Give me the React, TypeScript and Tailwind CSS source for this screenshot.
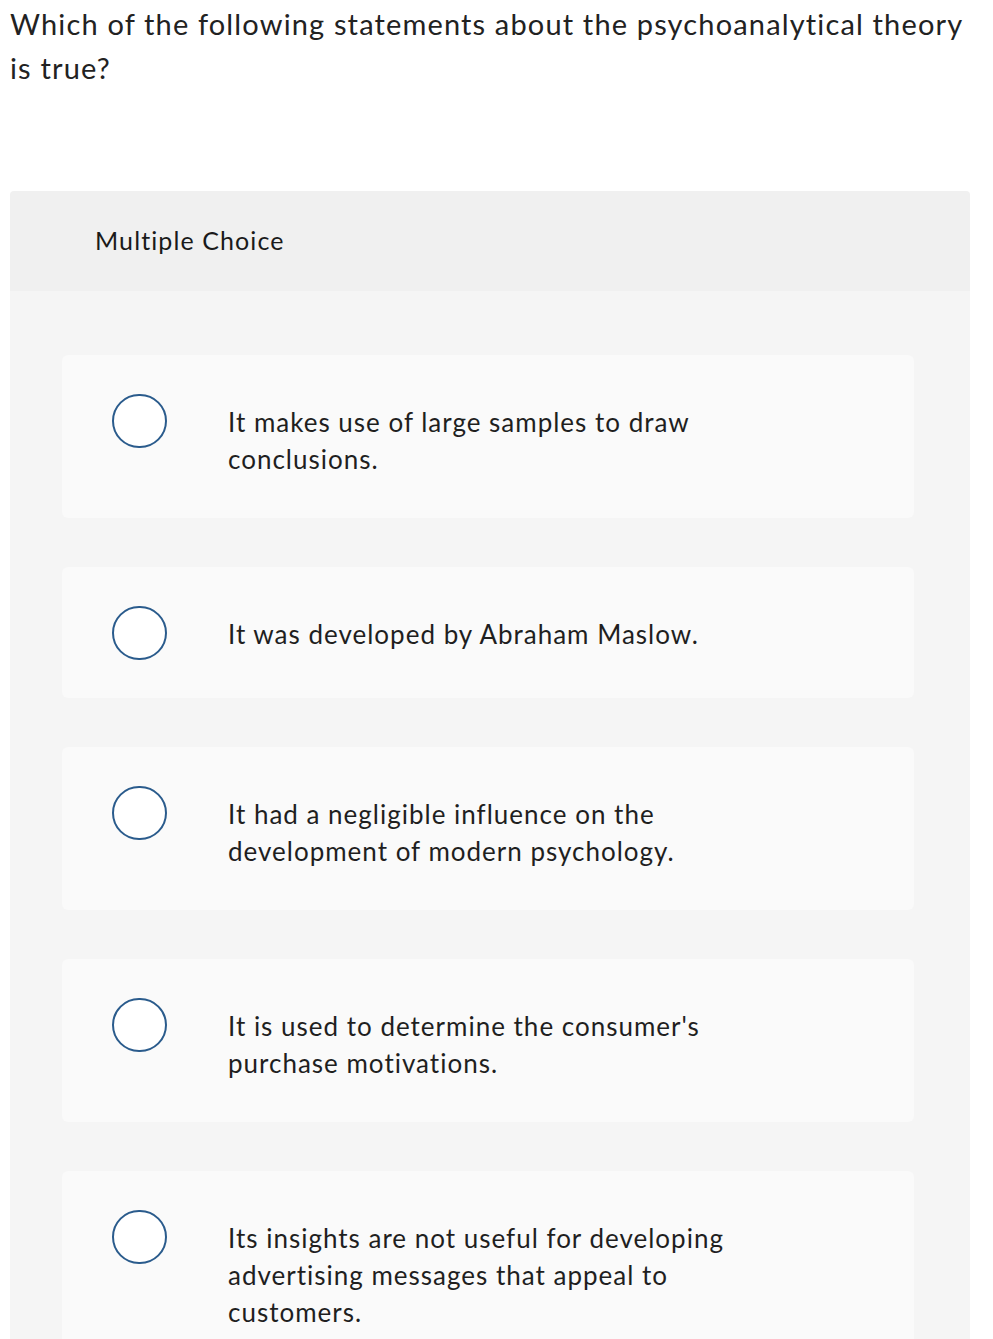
import React, { useState } from 'react';

const options = [
  'It makes use of large samples to draw conclusions.',
  'It was developed by Abraham Maslow.',
  'It had a negligible influence on the development of modern psychology.',
  "It is used to determine the consumer's purchase motivations.",
  'Its insights are not useful for developing advertising messages that appeal to customers.',
];

export default function App() {
  const [selected, setSelected] = useState<number | null>(null);

  return (
    <div className="w-full min-h-screen bg-white font-['Lato',sans-serif] text-[#1f1f1f]">
      {/* Question */}
      <div className="mx-[10px] max-w-[968px] pt-[2px] text-[29px] leading-[44px] tracking-[1.15px] text-[#222]">
        Which of the following statements about the psychoanalytical theory is true?
      </div>

      {/* Answer panel */}
      <div className="mx-[10px] mt-[101px] w-[960px] rounded-t-[4px] overflow-hidden">
        <div className="h-[100px] bg-[#f0f0f0] flex items-center pl-[85px]">
          <span className="text-[25px] tracking-[1.1px] text-[#1a1a1a]">Multiple Choice</span>
        </div>

        <div className="bg-[#f5f5f5] pl-[52px] pr-[56px] pt-[64px] pb-[60px] flex flex-col gap-[49px]">
          {options.map((text, i) => (
            <button
              key={i}
              onClick={() => setSelected(i)}
              className="w-full bg-[#fafafa] rounded-[6px] flex items-start pl-[50px] pt-[39px] pb-[38px] text-left cursor-pointer"
            >
              <span className="w-[55px] h-[54px] rounded-full border-2 border-[#2a5b8c] bg-white shrink-0 flex items-center justify-center">
                {selected === i && <span className="w-[27px] h-[27px] rounded-full bg-[#2a5b8c]" />}
              </span>
              <span className="ml-[61px] pt-[10px] pb-[2px] max-w-[515px] text-[26px] leading-[37px] tracking-[1px] text-[#1f1f1f]">
                {text}
              </span>
            </button>
          ))}
        </div>
      </div>
    </div>
  );
}
